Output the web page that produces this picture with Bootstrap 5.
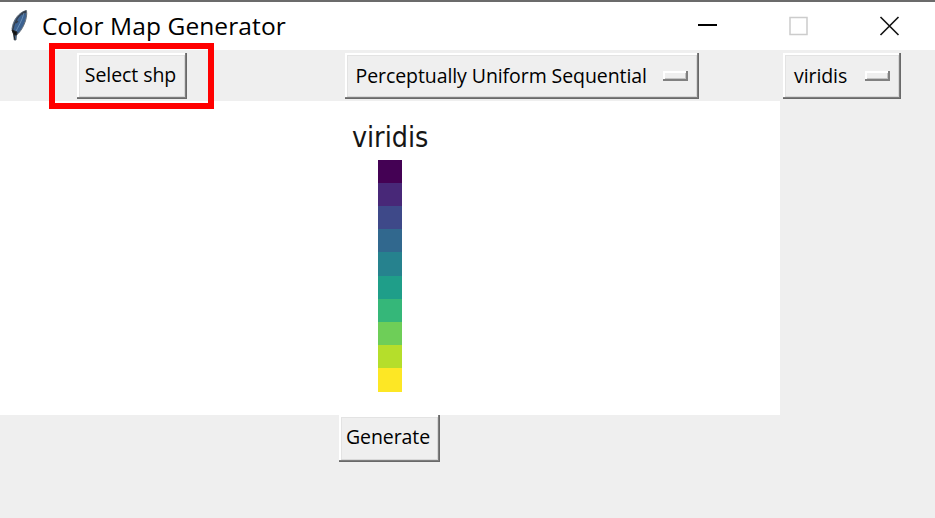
<!DOCTYPE html>
<html lang="en">
<head>
<meta charset="utf-8">
<meta name="viewport" content="width=device-width, initial-scale=1">
<title>Color Map Generator</title>
<link href="https://cdn.jsdelivr.net/npm/bootstrap@5.3.0/dist/css/bootstrap.min.css" rel="stylesheet">
<style>
body{background:#efefef;color:#000;font-family:"Open Sans","Noto Sans",sans-serif;height:518px}
.titlebar{height:50px;border-top:2px solid #6b6b6b;padding-left:9px}
.app-title{font-size:24.5px;line-height:1;margin-left:13px;letter-spacing:.1px;white-space:nowrap}
.win-controls{margin-right:35px;gap:70px}
.toolbar-row{height:51px;display:grid;grid-template-columns:263px 517px 155px}
.tk-btn{--bs-btn-color:#000;--bs-btn-border-radius:0;border-radius:0;border:0;background:#efefef;padding:0 2px 2px 0;height:46px;font-size:19.5px;letter-spacing:-.08px;line-height:1;white-space:nowrap;
box-shadow:inset -1px -1px #696969,inset -2px -2px #7e7e7e,inset 2px 2px #fff,inset -3px -3px #d8d8d8,inset 3px 3px #e3e3e3}
.pick{width:110px}
.menu-wide{width:354px;padding:0 11px 0 11px}
.menu-small{width:118px;padding:0 11px 0 11px}
.make{width:101px;height:47px}
.notch{width:25px;height:10px;background:#efefef;box-shadow:inset -2px -2px #808080,inset 2px 2px #fff,inset -3px -3px #c4c4c4}
.marker{left:49px;top:43px;width:165px;height:66px;border:6px solid #f00;pointer-events:none}
.plot{width:780px;height:313.5px;padding-top:20px}
.plot-title{font-family:"DejaVu Sans",sans-serif;font-size:27.5px;line-height:32px;color:#161616;transform:scaleX(.93)}
.ramp{width:24px;height:232px;margin-top:6.5px}
</style>
</head>
<body class="position-relative overflow-hidden">
<header class="titlebar bg-white d-flex align-items-center">
<svg width="20" height="34" viewBox="0 0 20 34" aria-hidden="true">
<path d="M17.5 1.5C10 3 4 11 3 20L4.500 25L5.200 31L7 31L7.500 26C13 22 19 10 17.500 1.500Z" fill="#3c6291" stroke="#69727b" stroke-width="1"/>
<path d="M17 2C10 5 5 13 3.500 22M17 3L14 5L15 6M9 12L7 14" fill="none" stroke="#343d49" stroke-width="1.300"/>
<path d="M15 4C13 12 9 18 6 24" fill="none" stroke="#7499bf" stroke-width=".8"/>
<path d="M3 21L8 23L7.500 26L5 26ZM5 26L6 31" fill="#111" stroke="#222"/>
</svg>
<span class="app-title">Color Map Generator</span>
<div class="win-controls d-flex align-items-center ms-auto">
<svg width="21" height="21" viewBox="0 0 21 21" aria-hidden="true"><path d="M1 9H20" stroke="#000" stroke-width="2"/></svg>
<svg width="21" height="21" viewBox="0 0 21 21" aria-hidden="true"><path d="M2 1.500H19V18.500H2Z" fill="none" stroke="#ccc" stroke-width="1.500"/></svg>
<svg width="21" height="21" viewBox="0 0 21 21" aria-hidden="true"><path d="M1.500 1L19.500 19M19.500 1L1.500 19" stroke="#111" stroke-width="1.600"/></svg>
</div>
</header>
<div class="toolbar-row align-items-center">
<div class="d-flex justify-content-center"><button class="btn tk-btn pick" type="button">Select shp</button></div>
<div class="d-flex justify-content-center"><button class="btn tk-btn menu-wide d-flex align-items-center justify-content-between" type="button"><span>Perceptually Uniform Sequential</span><span class="notch"></span></button></div>
<div class="d-flex" style="padding-left:3px"><button class="btn tk-btn menu-small d-flex align-items-center justify-content-between" type="button"><span>viridis</span><span class="notch"></span></button></div>
</div>
<main class="plot bg-white d-flex flex-column align-items-center">
<div class="plot-title">viridis</div>
<div class="ramp d-flex flex-column">
<div class="flex-fill" style="background:#440154"></div>
<div class="flex-fill" style="background:#482878"></div>
<div class="flex-fill" style="background:#3e4989"></div>
<div class="flex-fill" style="background:#31688e"></div>
<div class="flex-fill" style="background:#26828e"></div>
<div class="flex-fill" style="background:#1f9e89"></div>
<div class="flex-fill" style="background:#35b779"></div>
<div class="flex-fill" style="background:#6ece58"></div>
<div class="flex-fill" style="background:#b5de2b"></div>
<div class="flex-fill" style="background:#fde725"></div>
</div>
</main>
<footer class="d-flex justify-content-center" style="width:778px"><button class="btn tk-btn make" type="button">Generate</button></footer>
<div class="marker position-absolute"></div>
<script src="https://cdn.jsdelivr.net/npm/bootstrap@5.3.0/dist/js/bootstrap.bundle.min.js"></script>
</body>
</html>
